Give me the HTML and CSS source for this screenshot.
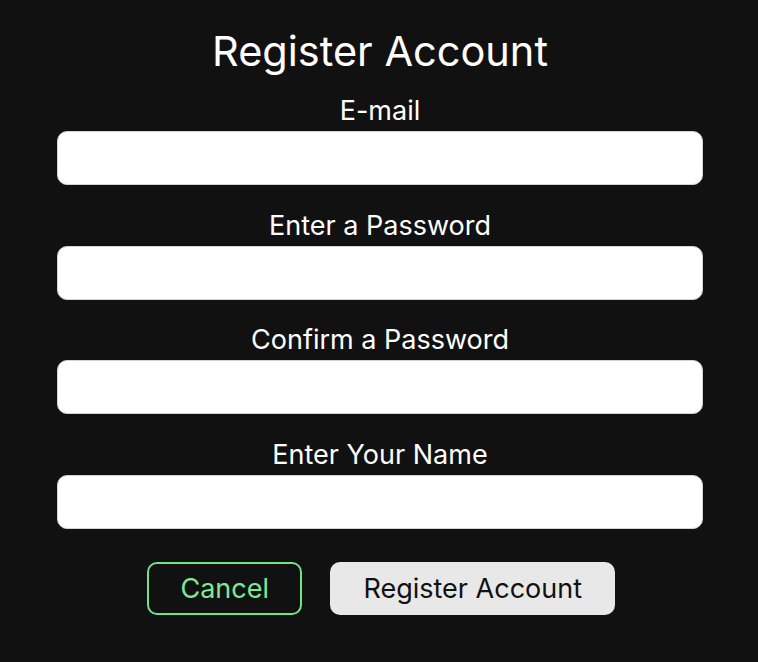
FILE: index.html
```html
<!DOCTYPE html>
<html lang="en">
<head>
<meta charset="utf-8">
<title>Register Account</title>
<link rel="stylesheet" href="styles.css">
</head>
<body>
<main class="page">
  <h1 class="title">Register Account</h1>
  <form class="form">
    <div class="field">
      <label class="label" for="email">E-mail</label>
      <input class="input" id="email" type="email">
    </div>
    <div class="field">
      <label class="label" for="pw">Enter a Password</label>
      <input class="input" id="pw" type="password">
    </div>
    <div class="field">
      <label class="label" for="pw2">Confirm a Password</label>
      <input class="input" id="pw2" type="password">
    </div>
    <div class="field">
      <label class="label" for="name">Enter Your Name</label>
      <input class="input" id="name" type="text">
    </div>
    <div class="actions">
      <button type="button" class="btn btn-cancel">Cancel</button>
      <button type="button" class="btn btn-primary">Register Account</button>
    </div>
  </form>
</main>
</body>
</html>
```
FILE: styles.css
```css
html, body {
  margin: 0;
  padding: 0;
  background: #111111;
}
body {
  font-family: Inter, "Noto Sans", sans-serif;
  color: #ffffff;
}
.page {
  box-sizing: border-box;
  width: 758px;
  min-height: 662px;
  padding: 26px 55px 0 57px;
  display: flex;
  flex-direction: column;
  align-items: stretch;
}
.title {
  margin: 0;
  font-size: 41.5px;
  line-height: 50px;
  font-weight: 400;
  text-align: center;
}
.form {
  margin-top: 18px;
  display: flex;
  flex-direction: column;
  gap: 23.5px;
}
.field {
  display: flex;
  flex-direction: column;
  gap: 4px;
}
.label {
  font-size: 27px;
  line-height: 33px;
  text-align: center;
}
.input {
  box-sizing: border-box;
  height: 54px;
  width: 100%;
  margin: 0;
  border: 1px solid #d2d2d2;
  border-radius: 10px;
  background: #ffffff;
  font-family: inherit;
  font-size: 20px;
  padding: 0 14px;
  outline: none;
}
.actions {
  margin-top: 10px;
  padding-left: 2px;
  display: flex;
  justify-content: center;
  gap: 28px;
}
.btn {
  box-sizing: border-box;
  height: 53px;
  border-radius: 10px;
  font-family: inherit;
  font-size: 27px;
  line-height: 1;
  cursor: pointer;
}
.btn-cancel {
  padding: 0 31.5px;
  background: transparent;
  border: 2px solid #6ee585;
  color: #7ee895;
}
.btn-primary {
  padding: 0 33px;
  background: #e8e8e8;
  border: 0;
  color: #111111;
}
```
